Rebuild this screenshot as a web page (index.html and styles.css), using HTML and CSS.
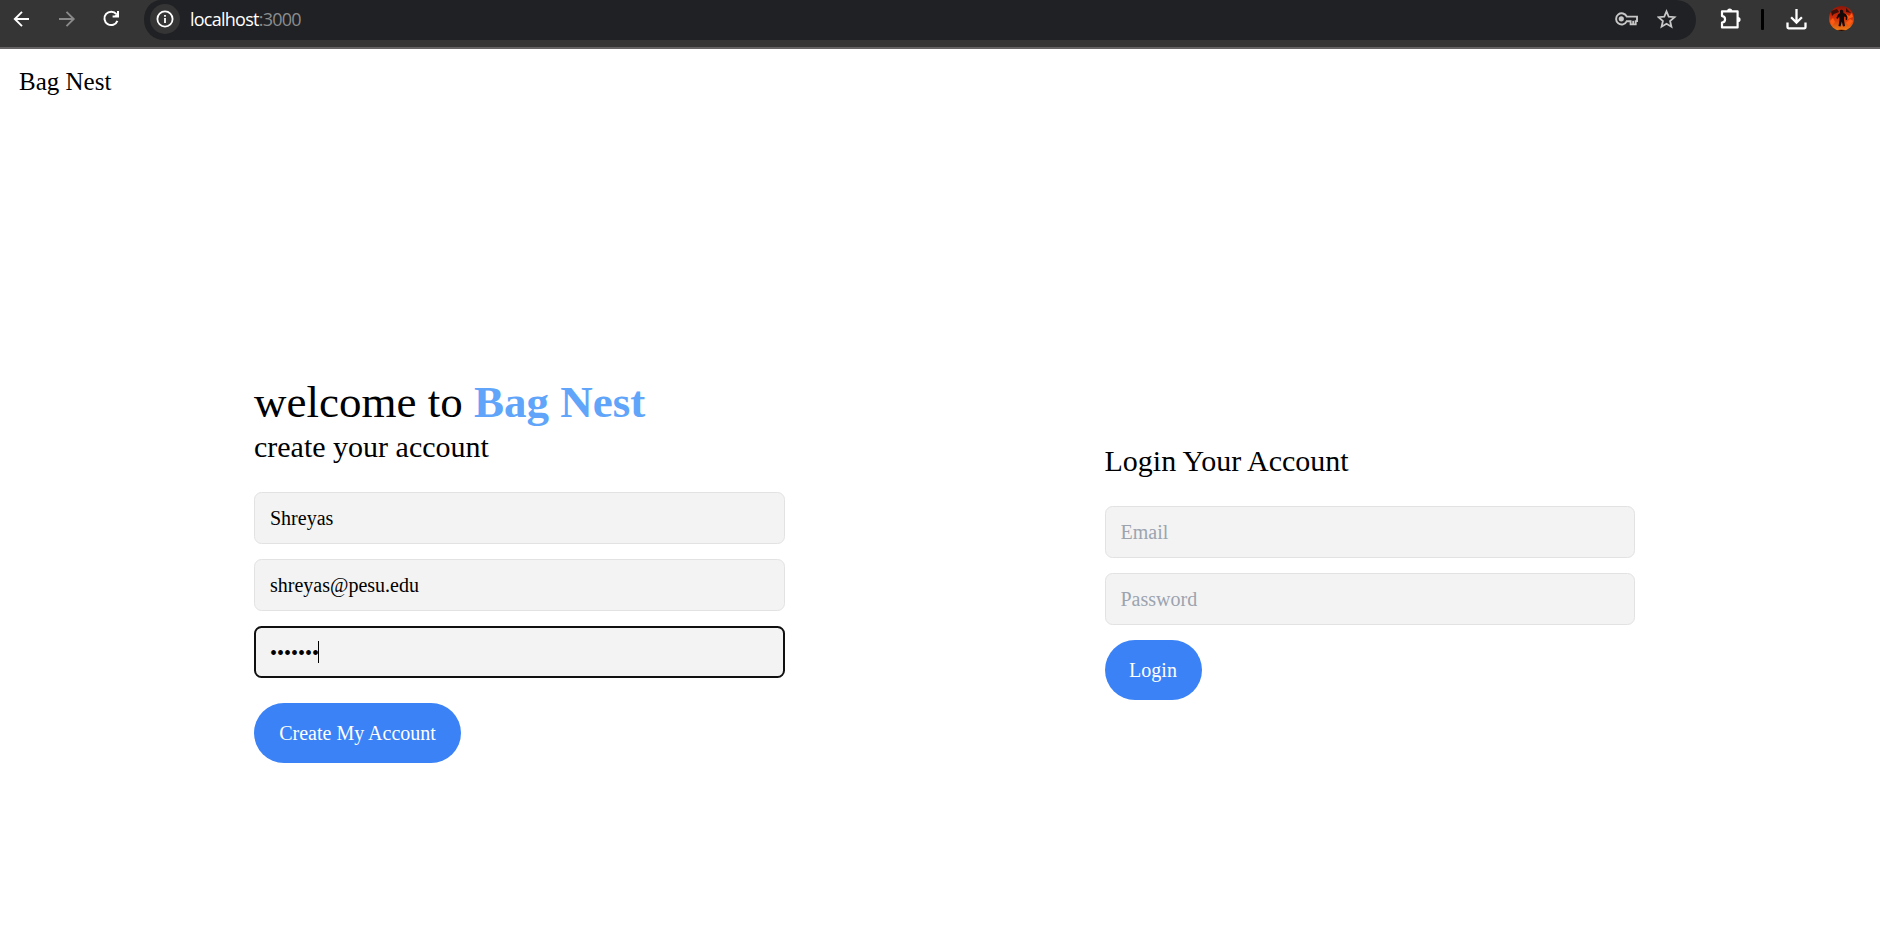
FILE: index.html
```html
<!DOCTYPE html>
<html lang="en">
<head>
<meta charset="utf-8">
<title>Bag Nest</title>
<link rel="stylesheet" href="styles.css">
</head>
<body>
<header class="toolbar">
  <div class="nav-icons">
    <svg width="18" height="18" viewBox="0 0 18 18" fill="none" stroke="#fff" stroke-width="1.9"><path d="M16 9H2M9 1.8 1.8 9l7.2 7.2"/></svg>
    <svg width="18" height="18" viewBox="0 0 18 18" fill="none" stroke="#8a8a8a" stroke-width="1.9"><path d="M1 9h14.5M8.5 1.8 15.7 9l-7.2 7.2"/></svg>
    <svg width="18" height="18" viewBox="0 0 18 18" fill="none" stroke="#fff" stroke-width="2"><path d="M13.4 4.2A6.7 6.7 0 1 0 14.4 10.8M15 1v5.6H9.6"/><path d="M15 2.5V6.6H11Z" fill="#fff" stroke="none"/></svg>
  </div>
  <div class="omnibox">
    <span class="site-info">
      <svg width="18" height="18" viewBox="0 0 18 18" fill="none" stroke="#fff" stroke-width="1.8"><circle cx="9" cy="9" r="7.6"/><path d="M9 8v5M9 5v1.8"/></svg>
    </span>
    <span class="url">localhost<span class="port">:3000</span></span>
    <svg class="key" width="23" height="14" viewBox="0 0 23 14" fill="none" stroke="#c7c7c7" stroke-width="1.9"><path d="M11.8 4.6A5.6 5.6 0 1 0 11.8 9.2H15.6V12.4H20.7V9.1H22V4.6Z"/><circle cx="6.3" cy="6.8" r="2.6" fill="#c7c7c7" stroke="none"/><path d="M18.2 12V8.8"/></svg>
    <svg width="20" height="20" viewBox="0 0 20 20" fill="none" stroke="#c7c7c7" stroke-width="1.8"><path d="M9.5 2.4 11.7 7.7 17.5 8.2 13.1 12 14.4 17.7 9.5 14.7 4.6 17.7 5.9 12 1.5 8.2 7.3 7.7Z"/></svg>
  </div>
  <div class="actions">
    <svg width="22" height="22" viewBox="0 0 22 22" fill="none" stroke="#fff" stroke-width="2.2" stroke-linejoin="round"><path d="M2 3.3H17.6V19.4H2V14.6C6.1 14.4 6.1 8.3 2 8.1Z"/><path d="M7.1 3A2.6 2.6 0 0 1 12.3 3ZM18 8.9A2.5 2.5 0 0 1 18 14.1Z" fill="#fff" stroke="none"/></svg>
    <span class="divider"></span>
    <svg width="22" height="22" viewBox="0 0 22 22" fill="none" stroke="#fff" stroke-width="2.3"><path d="M10.5 1v13.5M5.1 9.2l5.4 5.4 5.4-5.4M1.5 14.6v4.7q0 1 1 1H18.5q1 0 1-1v-4.7"/></svg>
    <svg class="avatar" width="25" height="25" viewBox="0 0 25 25">
      <defs>
        <linearGradient id="fire" x1="0" y1="0" x2="0" y2="1"><stop offset="0" stop-color="#8c1608"/><stop offset=".45" stop-color="#cf2c08"/><stop offset="1" stop-color="#f08018"/></linearGradient>
        <clipPath id="round"><circle cx="12.5" cy="12.5" r="12.5"/></clipPath>
      </defs>
      <g clip-path="url(#round)">
        <path d="M0 0h25v25H0z" fill="url(#fire)"/>
        <path d="M1 15l3-3 2 4-3 4zM17 17l4-4 3 2-4 5zM16 7l4 3 3-3 1 4-5 2z" fill="#ff5a13"/>
        <path d="M2 5 8 3 10 6 5 8 3 10zM17 2l5 5-5-1z" fill="#3d0d08"/>
        <path d="M11 4.3 12.5 3.5 14.2 4.5 14.5 7 17 8 18.5 11 17.8 14 16.8 14 16.8 11 15 10.5 15 14 16 20 14 20.5 12.8 15.5 11.5 20.5 9.5 20 10.5 14 10.3 10.5 8.5 13 7.3 12 9 8.5 11 7Z" fill="#140909"/>
        <path d="M5 24.5Q12 23 20 24.5V25H5Z" fill="#250c08"/>
      </g>
    </svg>
  </div>
</header>
<nav class="brand">Bag Nest</nav>
<main class="page">
  <form class="signup">
    <h1 class="title">welcome to <b class="accent">Bag Nest</b></h1>
    <h2 class="subtitle">create your account</h2>
    <div class="fields">
      <input class="field" type="text" value="Shreyas">
      <input class="field" type="text" value="shreyas@pesu.edu">
      <div class="field focused"><span>•••••••</span><span class="caret"></span></div>
    </div>
    <button class="btn create" type="button">Create My Account</button>
  </form>
  <form class="login">
    <h2 class="subtitle">Login Your Account</h2>
    <div class="fields">
      <input class="field" type="text" placeholder="Email">
      <input class="field" type="password" placeholder="Password">
    </div>
    <button class="btn enter" type="button">Login</button>
  </form>
</main>
</body>
</html>
```

FILE: styles.css
```css
* { box-sizing: border-box; }
body {
  margin: 0;
  height: 948px;
  overflow: hidden;
  background: #fff;
  color: #000;
  font-family: "Liberation Serif", "Times New Roman", serif;
}
svg { display: block; flex: none; }

.toolbar {
  display: flex;
  align-items: flex-start;
  height: 49px;
  background: #353535;
  border-bottom: 2px solid #666364;
  font-family: "Open Sans", "Noto Sans", sans-serif;
}
.nav-icons { display: flex; gap: 27px; padding: 10px 22px 0 13px; width: 144px; }
.omnibox {
  display: flex;
  align-items: center;
  width: 1552px;
  height: 40px;
  padding: 0 19px 2px 6px;
  background: #202124;
  border-radius: 17px 20px 20px 20px / 19px 20px 20px 20px;
}
.site-info {
  display: flex;
  align-items: center;
  justify-content: center;
  width: 30px;
  height: 30px;
  border-radius: 50%;
  background: #353535;
}
.url { flex: 1; margin-left: 10px; font-size: 18px; letter-spacing: -0.75px; color: #fff; line-height: 24px; }
.port { color: #8b8c8e; }
.key { margin-right: 19px; }
.actions { display: flex; align-items: center; padding: 6px 0 0 24px; height: 32px; }
.divider { width: 3px; height: 21px; margin: 0 22px 0 19px; border-radius: 1px; background: #000; }
.avatar { margin: -1px 0 0 21px; }

.brand { padding: 15px 19px 0; height: 83px; font-size: 25px; line-height: 35px; }
.page { display: flex; height: 816px; padding-left: 254px; }
.signup { width: 531px; padding-top: 245px; }
.login { width: 530px; margin-left: 319.5px; padding-top: 309px; }
.title { margin: 0; font-size: 45px; line-height: 50px; font-weight: 400; }
.accent { color: #60a5fa; font-weight: 700; }
.subtitle { margin: 0 0 25px; font-size: 30px; line-height: 40px; font-weight: 400; }
.fields { display: flex; flex-direction: column; gap: 15px; }
.field {
  display: flex;
  align-items: center;
  width: 100%;
  height: 52px;
  padding: 1px 15px 0;
  border: 1px solid #e2e2e3;
  border-radius: 7.5px;
  background: #f3f3f3;
  color: #000;
  font: 20px/30px "Liberation Serif", "Times New Roman", serif;
  outline: none;
}
.field::placeholder { color: #9ca3af; opacity: 1; }
.focused { border: 2px solid #101010; padding: 1px 14px 0; }
.caret { width: 1px; height: 22px; margin: 0 0 2px -1.5px; background: #000; }
.btn {
  display: block;
  height: 60px;
  padding: 0;
  border: 0;
  border-radius: 30px;
  background: #3b82f6;
  color: #fff;
  font: 20px/30px "Liberation Serif", "Times New Roman", serif;
}
.create { width: 207px; margin-top: 25px; }
.enter { width: 97px; margin-top: 15px; }
```
